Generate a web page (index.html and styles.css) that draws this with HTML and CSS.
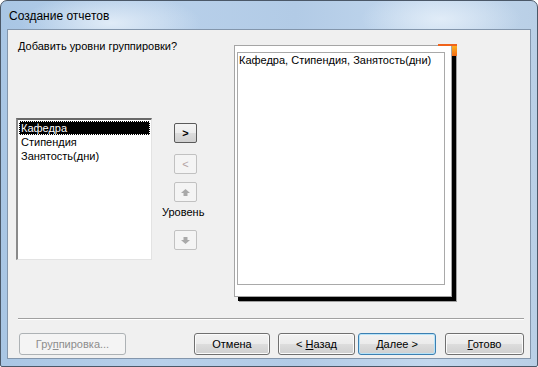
FILE: index.html
```html
<!DOCTYPE html>
<html lang="ru">
<head>
    <meta charset="UTF-8">
    <title>Создание отчетов</title>
    <link rel="stylesheet" href="styles.css">
</head>
<body>
    <div class="window">
        <div class="titlebar">Создание отчетов</div>
        <div class="client">
            <div class="content">
                <div class="left-col">
                    <div class="prompt">Добавить уровни группировки?</div>
                    <ul class="listbox">
                        <li class="selected">Кафедра</li>
                        <li>Стипендия</li>
                        <li>Занятость(дни)</li>
                    </ul>
                </div>

                <div class="mid-col">
                    <button class="small-btn">&gt;</button>
                    <button class="small-btn disabled">&lt;</button>
                    <button class="small-btn disabled">
                        <svg width="9" height="7" viewBox="0 0 9 7"><path d="M4.5 0 L9 4 H6.5 V7 H2.5 V4 H0 Z" fill="#a9a9a9"/></svg>
                    </button>
                    <div class="level-label">Уровень</div>
                    <button class="small-btn disabled">
                        <svg width="9" height="7" viewBox="0 0 9 7"><path d="M4.5 7 L9 3 H6.5 V0 H2.5 V3 H0 Z" fill="#a9a9a9"/></svg>
                    </button>
                </div>

                <div class="preview">
                    <span class="corner"></span>
                    <div class="preview-inner">Кафедра, Стипендия, Занятость(дни)</div>
                </div>
            </div>

            <div class="separator"></div>

            <div class="button-row">
                <button class="btn disabled">Гру<u>п</u>пировка...</button>
                <span class="spacer"></span>
                <button class="btn btn-cancel">Отмена</button>
                <button class="btn btn-back">&lt; <u>Н</u>азад</button>
                <button class="btn default"><u>Д</u>алее &gt;</button>
                <button class="btn btn-done"><u>Г</u>отово</button>
            </div>
        </div>
    </div>
</body>
</html>
```

FILE: styles.css
```css
:root {
    --client-bg: #f0f0f0;
    --text-color: #000;
    --disabled-text: #8d8d8d;
}

body {
    margin: 0;
    background: #fff;
    font-family: 'Liberation Sans', Arial, sans-serif;
    font-size: 11px;
    color: var(--text-color);
}

.window {
    width: 538px;
    height: 367px;
    box-sizing: border-box;
    border: 1px solid #4b5868;
    border-radius: 7px 7px 2px 2px;
    padding: 0 6px 7px 6px;
    display: flex;
    flex-direction: column;
    background:
        radial-gradient(ellipse 90px 30px at 110px 22px, rgba(235, 243, 251, 0.8), transparent),
        radial-gradient(ellipse 80px 30px at 440px 18px, rgba(232, 241, 250, 0.8), transparent),
        linear-gradient(90deg, #a9c6e4 0%, #b8d0ea 30%, #b2cbe6 55%, #c3d8ee 80%, #b9cfe6 100%);
}

.titlebar {
    height: 28px;
    line-height: 30px;
    padding-left: 2px;
    font-size: 12px;
    color: #000;
}

.client {
    flex: 1;
    background: var(--client-bg);
    border: 1px solid #8396ac;
    display: flex;
    flex-direction: column;
}

.content {
    height: 288px;
    display: flex;
}

.left-col {
    width: 136px;
    margin-left: 8px;
    display: flex;
    flex-direction: column;
}

.prompt {
    margin-top: 10px;
    margin-left: 2px;
    line-height: 13px;
    white-space: nowrap;
}

.listbox {
    list-style: none;
    margin: 65px 0 0 0;
    padding: 1px;
    height: 142px;
    box-sizing: border-box;
    background: #fff;
    border-style: solid;
    border-width: 2px 1px 1px 2px;
    border-color: #696969 #e3e3e3 #e3e3e3 #8a8a8a;
}

.listbox li {
    height: 14px;
    line-height: 14px;
    padding-left: 2px;
    white-space: nowrap;
}

.listbox li.selected {
    background: #000;
    color: #fff;
    outline: 1px dotted #fff;
    outline-offset: -1px;
}

.mid-col {
    width: 82px;
    display: flex;
    flex-direction: column;
    align-items: flex-start;
    padding-top: 93px;
    box-sizing: border-box;
}

.small-btn {
    width: 23px;
    height: 20px;
    padding: 0;
    margin: 0 0 0 22px;
    font-family: inherit;
    font-size: 11px;
    font-weight: bold;
    color: #000;
    border: 1px solid #5a5a5a;
    border-radius: 2px;
    background: linear-gradient(#f4f4f4 0%, #ececec 50%, #dcdcdc 51%, #d0d0d0 100%);
    display: flex;
    align-items: center;
    justify-content: center;
}

.small-btn + .small-btn {
    margin-top: 11px;
}

.small-btn.disabled {
    border-color: #c1c1c1;
    background: #f4f4f4;
    color: #b3a3a3;
    font-weight: normal;
}

.small-btn.disabled + .small-btn.disabled {
    margin-top: 8px;
}

.level-label {
    margin: 4px 0 11px 10px;
    line-height: 13px;
}

.preview {
    position: relative;
    margin-top: 15px;
    width: 218px;
    height: 252px;
    box-sizing: border-box;
    background: #fff;
    border: 1px solid #a5a5a5;
    padding: 6px 6px 11px 2px;
    box-shadow: 4px 4px 0 0 #000, 5px 5px 0 0 #a0a0a0;
}

.preview-inner {
    height: 100%;
    box-sizing: border-box;
    border: 1px solid #a9a9a9;
    padding: 1px 1px;
    line-height: 13px;
    white-space: nowrap;
}

.corner {
    position: absolute;
    top: -2px;
    right: -6px;
    width: 19px;
    height: 12px;
    border-top: 2px solid #f0631b;
    box-sizing: border-box;
}

.corner::after {
    content: "";
    position: absolute;
    right: 0;
    top: 0;
    width: 5px;
    height: 10px;
    background: linear-gradient(#fcb01e, #f26a16);
}

.separator {
    margin: 0 6px 0 10px;
    border-top: 1px solid #a0a0a0;
    border-bottom: 1px solid #fff;
}

.button-row {
    display: flex;
    align-items: center;
    margin-top: 13px;
    padding: 0 6px 0 11px;
}

.spacer {
    flex: 1;
}

.btn {
    height: 22px;
    width: 77px;
    padding: 0;
    font-family: inherit;
    font-size: 11px;
    color: #000;
    border: 1px solid #707070;
    border-radius: 3px;
    background: linear-gradient(#f2f2f2 0%, #ebebeb 50%, #dddddd 51%, #cfcfcf 100%);
    box-shadow: inset 0 0 0 1px #fbfbfb;
}

.btn u {
    text-decoration: underline;
}

.btn.disabled {
    width: 107px;
    border-color: #adb2b5;
    background: #f4f4f4;
    color: var(--disabled-text);
    box-shadow: none;
}

.btn.btn-cancel {
    width: 76px;
}

.btn.btn-back {
    margin-left: 8px;
}

.btn.default {
    width: 78px;
    margin-left: 3px;
    border-color: #3c7fb1;
    box-shadow: inset 0 0 0 1px #b6e3f9;
}

.btn.btn-done {
    margin-left: 9px;
    width: 79px;
}
```
